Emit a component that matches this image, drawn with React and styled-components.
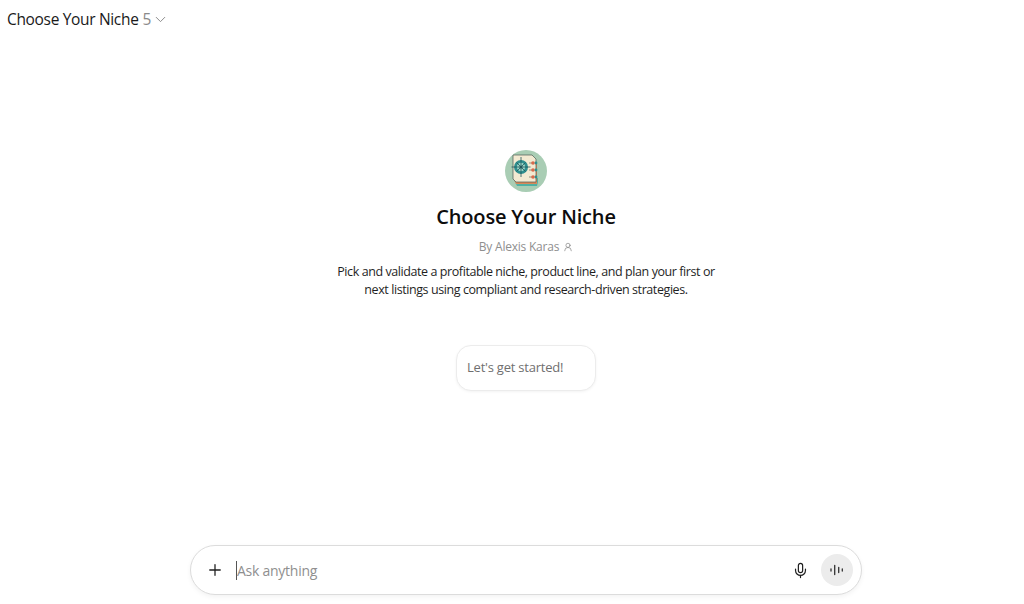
import React from 'react';
import styled, { createGlobalStyle } from 'styled-components';
import { ChevronDown, Plus, Mic, UserRound } from 'lucide-react';

const GlobalStyle = createGlobalStyle`
  html, body {
    margin: 0;
    padding: 0;
    height: 100%;
    background: #fff;
    overflow: hidden;
  }
  body {
    font-family: "Open Sans", "Noto Sans", "Liberation Sans", sans-serif;
    color: #0d0d0d;
  }
`;

const Page = styled.div`
  width: 1024px;
  height: 604px;
  display: flex;
  flex-direction: column;
  background: #fff;
`;

const Header = styled.header`
  height: 38px;
  padding-left: 7px;
  display: flex;
  align-items: center;
  gap: 4px;
  font-size: 15.5px;
  letter-spacing: -0.33px;
`;

const HeaderTitle = styled.span`
  color: #1a1a1a;
`;

const HeaderCount = styled.span`
  color: #8a8a8a;
`;

const HeaderChevron = styled(ChevronDown)`
  margin-left: -3px;
`;

const Main = styled.main`
  flex: 1;
  padding-left: 28px;
  display: flex;
  flex-direction: column;
  align-items: center;
`;

const Intro = styled.section`
  flex: 1;
  padding-top: 112px;
  display: flex;
  flex-direction: column;
  align-items: center;
`;

const Avatar = styled.svg`
  width: 42px;
  height: 42px;
  display: block;
`;

const Title = styled.h1`
  margin: 11px 0 0;
  font-size: 20px;
  line-height: 28px;
  font-weight: 600;
  letter-spacing: -0.16px;
  color: #0d0d0d;
`;

const Author = styled.div`
  margin-top: 6px;
  display: flex;
  align-items: center;
  gap: 4px;
  font-size: 12px;
  line-height: 20px;
  letter-spacing: -0.22px;
  color: #8f8f8f;
`;

const Description = styled.p`
  margin: 6px 0 0;
  width: 400px;
  text-align: center;
  font-size: 12.5px;
  line-height: 18px;
  letter-spacing: -0.42px;
  color: #1f1f1f;
`;

const Starter = styled.button`
  margin-top: 46px;
  width: 140px;
  height: 46px;
  padding: 0 0 3px 10px;
  text-align: left;
  font: inherit;
  font-size: 13px;
  letter-spacing: -0.22px;
  color: #6f6f6f;
  background: #fff;
  border: 1px solid #ececec;
  border-radius: 15px;
  box-shadow: 0 1px 3px rgba(0, 0, 0, 0.05);
`;

const Composer = styled.form`
  box-sizing: border-box;
  width: 672px;
  height: 50px;
  margin-bottom: 9px;
  padding: 0 8px 0 15px;
  display: flex;
  align-items: center;
  background: #fff;
  border: 1px solid #dcdcdc;
  border-radius: 25px;
  box-shadow: 0 2px 5px rgba(0, 0, 0, 0.05);
`;

const IconButton = styled.span`
  display: flex;
  align-items: center;
  justify-content: center;
  color: #1f1f1f;
`;

const Prompt = styled.div`
  flex: 1;
  margin-left: 12px;
  height: 19px;
  line-height: 19px;
  font-size: 14px;
  letter-spacing: -0.26px;
  color: #8f8f8f;
  border-left: 1px solid #555;
`;

const VoiceButton = styled.span`
  width: 32px;
  height: 32px;
  margin-left: 12px;
  border-radius: 50%;
  background: #ececec;
  display: flex;
  align-items: center;
  justify-content: center;
`;

const BookAvatar = () => (
  <Avatar viewBox="0 0 42 42">
    <circle cx="21" cy="21" r="21" fill="#a9cdb4" />
    <path d="M9 30 L12 36 L32 36 L33 32 L33 28 Z" fill="#4fb0a4" />
    <path d="M8 28 L11 34 L32 34 L32 12 L8 12 Z" fill="#d9895a" />
    <path d="M8 5 L27 5 L31 9 L31 32 L11 32 L8 29 Z" fill="#f3ead2" stroke="#4a5a55" strokeWidth="0.7" />
    <circle cx="16" cy="17" r="7" fill="#2f8f8f" />
    <circle cx="16" cy="17" r="4.2" fill="#9ad4c6" />
    <path d="M16 7 V27 M6.5 17 H25.5 M11.5 12.5 L20.5 21.5 M20.5 12.5 L11.5 21.5" stroke="#22565c" strokeWidth="0.8" />
    <circle cx="16" cy="17" r="1.5" fill="#22565c" />
    <path d="M24 13 H28 M24 20 H28 M24 27 H28" stroke="#6a6a5c" strokeWidth="0.7" />
    <circle cx="28" cy="13" r="1.8" fill="#d9694a" />
    <circle cx="31" cy="13" r="1.4" fill="#2f8f8f" />
    <circle cx="28" cy="20" r="1.8" fill="#d9694a" />
    <circle cx="31" cy="20" r="1.4" fill="#2f8f8f" />
    <circle cx="28" cy="27" r="1.8" fill="#d9694a" />
    <circle cx="31" cy="27" r="1.4" fill="#2f8f8f" />
  </Avatar>
);

const VoiceBars = () => (
  <svg width="16" height="16" viewBox="0 0 16 16" fill="none" stroke="#333" strokeWidth="1.3" strokeLinecap="round">
    <path d="M2 7 V9" />
    <path d="M5.7 3.5 V12.5" />
    <path d="M9.7 5.5 V10.5" />
    <path d="M13.3 7 V9" />
  </svg>
);

const App = () => (
  <Page>
    <GlobalStyle />
    <Header>
      <HeaderTitle>Choose Your Niche</HeaderTitle>
      <HeaderCount>5</HeaderCount>
      <HeaderChevron size={17} color="#8a8a8a" strokeWidth={1.4} />
    </Header>
    <Main>
      <Intro>
        <BookAvatar />
        <Title>Choose Your Niche</Title>
        <Author>
          By Alexis Karas
          <UserRound size={10} strokeWidth={1.5} color="#777" />
        </Author>
        <Description>
          Pick and validate a profitable niche, product line, and plan your first or next listings using compliant and
          research-driven strategies.
        </Description>
        <Starter type="button">Let's get started!</Starter>
      </Intro>
      <Composer>
        <IconButton>
          <Plus size={18} strokeWidth={1.7} />
        </IconButton>
        <Prompt>Ask anything</Prompt>
        <IconButton>
          <Mic size={17} strokeWidth={1.7} />
        </IconButton>
        <VoiceButton>
          <VoiceBars />
        </VoiceButton>
      </Composer>
    </Main>
  </Page>
);

export default App;
